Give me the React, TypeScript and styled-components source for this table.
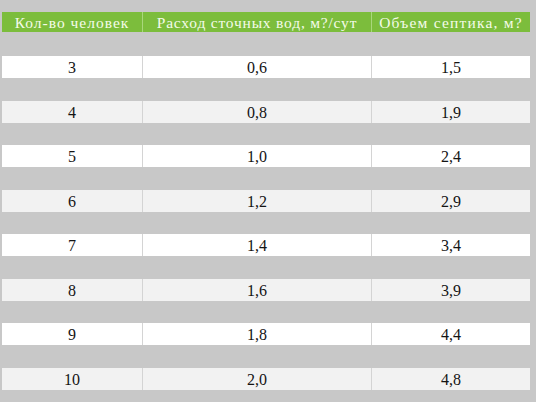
import React from "react";
import styled, { createGlobalStyle } from "styled-components";

const Global = createGlobalStyle`
  html, body { margin: 0; padding: 0; background: #c8c8c8; }
  body { width: 536px; height: 402px; overflow: hidden; }
`;

const Page = styled.div`
  padding: 12px 6px 0 2px;
  display: flex;
  flex-direction: column;
`;

const Header = styled.div`
  display: grid;
  grid-template-columns: 140px 229px 159px;
  height: 20px;
  background: #7cbd3c;
`;

const HeadCell = styled.div<{ $first?: boolean; $spacing: number }>`
  display: flex;
  align-items: center;
  justify-content: center;
  padding-top: 1px;
  color: #f4fbe9;
  font-family: "Liberation Serif", "Times New Roman", serif;
  font-size: 15.5px;
  letter-spacing: ${(p) => p.$spacing}px;
  white-space: nowrap;
  border-left: ${(p) => (p.$first ? "none" : "1px solid #a9d77c")};
`;

const Body = styled.div`
  display: flex;
  flex-direction: column;
  padding-top: 24px;
  gap: 22.5px;
`;

const Row = styled.div<{ $alt: boolean }>`
  display: grid;
  grid-template-columns: 140px 229px 159px;
  height: 22px;
  background: ${(p) => (p.$alt ? "#f2f2f2" : "#ffffff")};
`;

const Cell = styled.div<{ $first?: boolean }>`
  display: flex;
  align-items: center;
  justify-content: center;
  padding-top: 2px;
  box-sizing: border-box;
  color: #141414;
  font-family: "Liberation Serif", "Times New Roman", serif;
  font-size: 16px;
  border-left: ${(p) => (p.$first ? "none" : "1px solid #d4d4d4")};
`;

const data: [string, string, string][] = [
  ["3", "0,6", "1,5"],
  ["4", "0,8", "1,9"],
  ["5", "1,0", "2,4"],
  ["6", "1,2", "2,9"],
  ["7", "1,4", "3,4"],
  ["8", "1,6", "3,9"],
  ["9", "1,8", "4,4"],
  ["10", "2,0", "4,8"],
];

export default function App() {
  return (
    <>
      <Global />
      <Page>
        <Header>
          <HeadCell $first $spacing={1}>Кол-во человек</HeadCell>
          <HeadCell $spacing={0.8}>Расход сточных вод, м?/сут</HeadCell>
          <HeadCell $spacing={1.2}>Объем септика, м?</HeadCell>
        </Header>
        <Body>
          {data.map((r, i) => (
            <Row key={i} $alt={i % 2 === 1}>
              <Cell $first>{r[0]}</Cell>
              <Cell>{r[1]}</Cell>
              <Cell>{r[2]}</Cell>
            </Row>
          ))}
        </Body>
      </Page>
    </>
  );
}
